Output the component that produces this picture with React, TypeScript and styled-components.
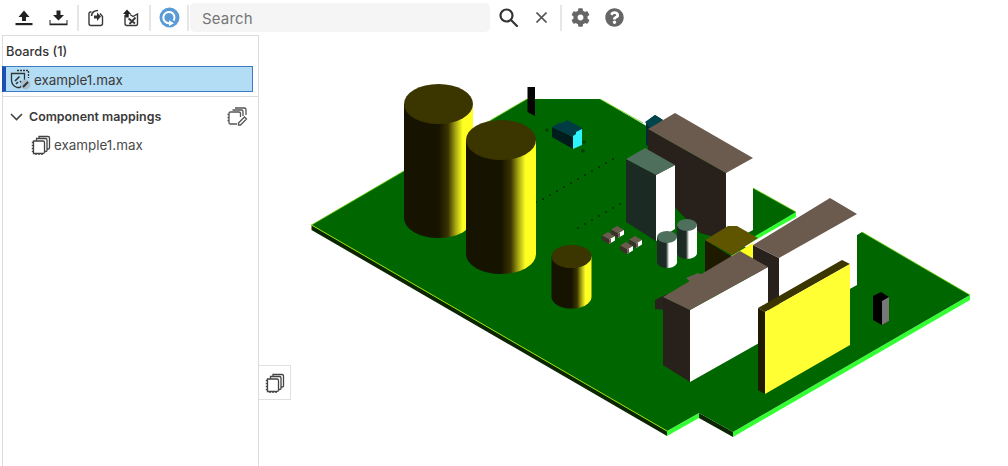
import React from "react";
import styled, { createGlobalStyle } from "styled-components";
import { FaCog, FaQuestionCircle } from "react-icons/fa";

const Global = createGlobalStyle`
  html, body { margin: 0; padding: 0; background: #fff; }
  body { font-family: Inter, "Noto Sans", sans-serif; color: #333; }
`;

const Page = styled.div`
  width: 1008px;
  height: 466px;
  display: flex;
  flex-direction: column;
  overflow: hidden;
  background: #fff;
`;

const Toolbar = styled.div`
  height: 35px;
  display: flex;
  align-items: center;
  padding-left: 12px;
  box-sizing: border-box;
`;

const ToolButton = styled.button<{ $w: number; $ml?: number }>`
  width: ${(p) => p.$w}px;
  height: 30px;
  margin-left: ${(p) => p.$ml ?? 0}px;
  padding: 0;
  border: 0;
  background: none;
  display: flex;
  align-items: center;
  justify-content: center;
  color: #666;
`;

const Sep = styled.div<{ $ml?: number }>`
  width: 2px;
  height: 26px;
  background: #e6e6e6;
  margin-left: ${(p) => p.$ml ?? 0}px;
`;

const SearchBox = styled.div`
  width: 300px;
  height: 29px;
  margin-left: 1px;
  background: #f5f5f5;
  border-radius: 5px;
  display: flex;
  align-items: center;
  padding: 2px 0 0 12px;
  box-sizing: border-box;
  font-size: 15px;
  letter-spacing: 0.15px;
  color: #757575;
`;

const Main = styled.div`
  flex: 1;
  display: flex;
  position: relative;
  min-height: 0;
`;

const Panel = styled.aside`
  width: 257px;
  margin-left: 2px;
  border-left: 1px solid #dcdcdc;
  border-right: 1px solid #dcdcdc;
  border-top: 1px solid #dcdcdc;
  box-sizing: border-box;
  display: flex;
  flex-direction: column;
`;

const PanelTitle = styled.div`
  height: 30px;
  display: flex;
  align-items: center;
  padding-left: 3px;
  font-size: 12.8px;
  font-weight: 500;
  color: #333;
`;

const SelectedRow = styled.div`
  height: 26px;
  width: 251px;
  margin-left: -1px;
  box-sizing: border-box;
  border: 1px solid #3a7ac8;
  border-left: 4px solid #1d4fb2;
  background: #b3dcf5;
  display: flex;
  align-items: center;
  gap: 3px;
  padding: 1px 0 0 4px;
  font-size: 13.4px;
  color: #3a3a3a;
`;

const Divider = styled.div`
  height: 1px;
  margin: 4px 0 0 -1px;
  background: #dcdcdc;
`;

const SectionHead = styled.div`
  height: 37px;
  box-sizing: border-box;
  display: flex;
  align-items: center;
  padding: 2px 10px 0 7px;
  font-size: 12.4px;
  font-weight: 600;
  color: #3a3a3a;
`;

const SectionLabel = styled.span`
  flex: 1;
  margin-left: 6px;
`;

const TreeRow = styled.div`
  height: 22px;
  display: flex;
  align-items: center;
  gap: 3px;
  padding-left: 28px;
  font-size: 13.4px;
  color: #4a4a4a;
`;

const Viewport = styled.div`
  flex: 1;
  min-width: 0;
  position: relative;
`;

const Scene = styled.svg`
  display: block;
  position: absolute;
  left: 0;
  top: 0;
`;

const FloatTab = styled.div`
  position: absolute;
  left: 0;
  top: 330px;
  width: 32px;
  height: 35px;
  box-sizing: border-box;
  border: 1px solid #e0e0e0;
  border-left: 0;
  background: #fff;
  display: flex;
  align-items: center;
  justify-content: center;
`;

const UpIcon = () => (
  <svg width="18" height="16" viewBox="0 0 18 16" fill="#222">
    <path d="M9 0.5 L14.5 7 H11 V11 H7 V7 H3.5 Z" />
    <rect x="0.5" y="13" width="17" height="2.2" />
  </svg>
);
const DownIcon = () => (
  <svg width="19" height="16" viewBox="0 0 19 16" fill="#222">
    <path d="M9.5 10.5 L4 5 H7.5 V0.5 H11.5 V5 H15 Z" />
    <path d="M0.5 10 H1.5 V13.5 H17.5 V10 H18.5 V15.2 H0.5 Z" />
  </svg>
);
const DocInIcon = () => (
  <svg width="16" height="18" viewBox="0 0 16 18" fill="none" stroke="#3a3a3a" strokeWidth="1.4">
    <path d="M3.5 3 H2.5 Q1 3 1 4.5 V14.5 Q1 16.5 3 16.5 H12.5 Q14.5 16.5 14.5 14.5 V7.5 L12 4.5" />
    <path d="M6 6.5 H9 V3.5 L13 7.5 L9 12 V9.5 H6 Z" fill="#333" stroke="none" />
    <path d="M3.5 7 Q4 1.5 10 1.5" strokeWidth="1.6" />
  </svg>
);
const DocOutIcon = () => (
  <svg width="18" height="18" viewBox="0 0 18 18" fill="none" stroke="#3a3a3a" strokeWidth="1.4">
    <path d="M3 6 V14.5 Q3 16.5 5 16.5 H14 Q15.5 16.5 15.5 14.5 V5 L11 7.5 L8 5.5" />
    <path d="M5 0.5 L1 5 H3.3 V8.5 H6.7 V5 H9 Z" fill="#222" stroke="none" />
    <path d="M6.5 9.5 L13 14.5 M13.5 8.5 L7.5 15" strokeWidth="1.9" />
  </svg>
);
const SyncIcon = () => (
  <svg width="21" height="21" viewBox="0 0 21 21">
    <circle cx="10.5" cy="10.5" r="10" fill="#5a9bd6" />
    <path d="M14.6 13.6 A5.6 5.6 0 1 0 10.5 16.1" fill="none" stroke="#fff" strokeWidth="2" />
    <path d="M10 13.2 L15 16.2 L10 19 Z" fill="#fff" />
  </svg>
);
const SearchIcon = () => (
  <svg width="19" height="19" viewBox="0 0 19 19" fill="none" stroke="#333" strokeWidth="2.2">
    <circle cx="7.5" cy="7.5" r="6" />
    <path d="M12 12 L18 18" strokeLinecap="round" />
  </svg>
);
const CloseIcon = () => (
  <svg width="11" height="11" viewBox="0 0 11 11" fill="none" stroke="#555" strokeWidth="1.6">
    <path d="M0.5 0.5 L10.5 10.5 M10.5 0.5 L0.5 10.5" />
  </svg>
);
const BoardFileIcon = () => (
  <svg width="21" height="21" viewBox="0 0 21 21" fill="none" stroke="#333" strokeWidth="1.3">
    <path d="M7 1.5 H18.5 V9" strokeDasharray="2 1" />
    <path d="M1.5 4.5 H14.5 V13 L10 18.5 H7 Q1.5 16.5 1.5 11 Z" fill="#b3dcf5" />
    <path d="M5 12 L9.5 7.5 M10 12 L12 14 M6 15 L8 13" strokeWidth="1.7" />
    <circle cx="15.5" cy="15.5" r="5" fill="#a9bfcc" stroke="none" />
    <path d="M13 18 L18 13" stroke="#333" strokeWidth="2" />
  </svg>
);
const StackIcon = () => (
  <svg width="20" height="20" viewBox="0 0 20 20" fill="#fff" stroke="#444" strokeWidth="1.3">
    <path d="M8 1.5 H17 Q18.5 1.5 18.5 3 V13 Q18.5 14 17 14 H8 Z" />
    <path d="M5.5 3.5 H14.5 Q16 3.5 16 5 V15.5 Q16 16.5 14.5 16.5 H5.5 Z" />
    <path d="M2.5 6 H12 Q13.5 6 13.5 7.5 V17 Q13.5 18.5 12 18.5 H2.5 Z" />
    <path d="M2.5 7.5 H0.8 M2.5 10.5 H0.8 M2.5 13.5 H0.8 M2.5 16.5 H0.8 M5 18.5 V20 M8 18.5 V20 M11 18.5 V20" strokeWidth="1.4" />
  </svg>
);
const StackEditIcon = () => (
  <svg width="21" height="19" viewBox="0 0 21 19" fill="#fff" stroke="#555" strokeWidth="1.3">
    <path d="M8 1 H17.5 Q19 1 19 2.5 V8" />
    <path d="M5.5 3 H14.5 Q16 3 16 4.5 V9" />
    <path d="M10 17 H3.5 Q2 17 2 15.5 V6.5 Q2 5 3.5 5 H12 Q13.5 5 13.5 6.5 V10" />
    <path d="M2 7.5 H0.5 M2 10.5 H0.5 M2 13.5 H0.5" />
    <path d="M11.5 16 L17.5 10 L19.5 12 L13.5 18 H11.5 Z" />
  </svg>
);
const ChevronIcon = () => (
  <svg width="13" height="8" viewBox="0 0 13 8" fill="none" stroke="#444" strokeWidth="1.6">
    <path d="M1 1 L6.5 6.5 L12 1" />
  </svg>
);

const Cylinder = ({ cx, rx, ry, top, bottom }: { cx: number; rx: number; ry: number; top: number; bottom: number }) => (
  <g>
    <path
      d={`M${cx - rx} ${top} V${bottom} A${rx} ${ry} 0 0 0 ${cx + rx} ${bottom} V${top} Z`}
      fill="url(#cyl)"
    />
    <ellipse cx={cx} cy={top} rx={rx} ry={ry} fill="#3b3500" />
  </g>
);

const Box = ({ top, left, right }: { top: string; left: string; right: string }) => (
  <g>
    <path d={left} fill="#28201a" />
    <path d={right} fill="#fff" />
    <path d={top} fill="#6b5a4e" />
  </g>
);

const Chip = ({ x, y }: { x: number; y: number }) => (
  <g transform={`translate(${x} ${y})`}>
    <path d="M0 4.5 L6 1 L13 5 L7 8.5 Z" fill="#6b5a4e" />
    <path d="M0 4.5 L7 8.5 V13 L0 9 Z" fill="#3a302a" />
    <path d="M7 8.5 L13 5 V9.5 L7 13 Z" fill="#fff" />
    <path d="M7 8.5 L9 7.5 V12 L7 13 Z" fill="#6b5a4e" />
  </g>
);

const holes: [number, number][] = [
  [536, 202], [543, 199], [550, 195], [557, 191], [564, 187], [571, 183], [578, 179], [585, 175], [592, 171], [599, 167], [606, 163], [613, 159],
  [578, 228], [585, 224], [592, 220], [599, 216], [606, 212], [613, 208], [620, 204],
];

const Board = () => (
  <Scene width="749" height="431" viewBox="259 35 749 431">
    <defs>
      <linearGradient id="cyl" x1="0" x2="1" y1="0" y2="0">
        <stop offset="0" stopColor="#161300" />
        <stop offset="0.5" stopColor="#161300" />
        <stop offset="0.64" stopColor="#3a3400" />
        <stop offset="0.75" stopColor="#a8a812" />
        <stop offset="0.85" stopColor="#ffff22" />
        <stop offset="1" stopColor="#ffff22" />
      </linearGradient>
      <linearGradient id="smallCyl" x1="0" x2="1" y1="0" y2="0">
        <stop offset="0" stopColor="#1b2a22" />
        <stop offset="0.45" stopColor="#1b2a22" />
        <stop offset="0.6" stopColor="#fff" />
        <stop offset="1" stopColor="#fff" />
      </linearGradient>
    </defs>

    <path d="M311.5 225 V230 L667 436 V431 Z" fill="#0a2600" />
    <path d="M667 431 V436 L699 418 V413 Z" fill="#33ff33" />
    <path d="M699 413 V418 L733 437 V432 Z" fill="#0a2600" />
    <path d="M733 432 V437 L970 300 V295 Z" fill="#33ff33" />
    <path d="M796 212 V217 L745 246 L745 240 Z" fill="#33ff33" />

    <path
      d="M311.5 225 L527 99 H600 L753 188 L796 212 L740 245 L800 270 L862 232 L970 295 L733 432 L699 413 L667 431 Z"
      fill="#006600"
    />
    <path d="M311.5 225 L667 431" stroke="#9adf00" strokeWidth="1" fill="none" />
    <path d="M311.5 225 L527 99 M600 99 L643 123 M753 188 L796 212 M862 232 L970 295" stroke="#66d000" strokeWidth="0.8" fill="none" />

    {holes.map(([x, y]) => (
      <circle key={`${x}-${y}`} cx={x} cy={y} r="1" fill="#0a2a05" />
    ))}
    <circle cx="547" cy="130" r="1.6" fill="#0a3a05" />
    <circle cx="584" cy="142" r="1.6" fill="#0a3a05" />
    <circle cx="583" cy="151" r="1.8" fill="#0a3a05" />

    <path d="M527.5 87 H535 V116 L527.5 112 Z" fill="#050505" />

    <path d="M552 127 L573 137 V149 L552 137 Z" fill="#001c1c" />
    <path d="M552 127 L560 122.5 L562 123 L567 120 L583 128.5 L573 137 Z" fill="#003c44" />
    <path d="M573 136 L576 134 L576 132 L582 129 V145 L573 149 Z" fill="#2cf5ff" />

    <Cylinder cx={438.5} rx={34.5} ry={20} top={104} bottom={218} />
    <Cylinder cx={501} rx={35} ry={20} top={140} bottom={254} />
    <Cylinder cx={571.5} rx={20} ry={11.5} top={256.5} bottom={297} />

    <Chip x={602} y={231} />
    <Chip x={611} y={225} />
    <Chip x={620} y={241} />
    <Chip x={629} y={235} />

    <path d="M646 122 L655 115 L663 120 L648 146 L646 145 Z" fill="#002c32" />
    <path d="M645 122 L655 115 L663 120 L650 128 Z" fill="#00444c" />

    <Box
      top="M648 129 L675 113 L753 158 L726 173 Z"
      left="M648 129 L726 173 V240 L700 233 L648 180 Z"
      right="M726 173 L753 158 V230 L726 245 Z"
    />

    <path d="M656 175 L675 165 V229 L656 241 Z" fill="#fff" />
    <path d="M626 159 L656 175 V241 L626 222 Z" fill="#1b2a22" />
    <path d="M626 159 L645 148 L675 165 L656 175 Z" fill="#4e6f5c" />

    <path d="M677 224 V253 A10 6 0 0 0 697 253 V224 Z" fill="url(#smallCyl)" />
    <ellipse cx="687" cy="225" rx="10" ry="6" fill="#4e6f5c" />
    <path d="M657 237 V263 A10 6 0 0 0 677 261 V237 Z" fill="url(#smallCyl)" />
    <ellipse cx="667" cy="237" rx="10" ry="6" fill="#4e6f5c" />

    <path d="M705 240 L731 256 V272 L705 272 Z" fill="#1e1a00" />
    <path d="M731 256 L753 243 V262 L731 274 Z" fill="#ffff22" />
    <path d="M705 240 L728 226 H737 L758 238 L732 255 Z" fill="#5f5500" />

    <path d="M655 300 L667 294 V310 L655 309 Z" fill="#2a221c" />
    <path d="M686 278 L698 273 L705 276 L692 283 Z" fill="#6b5a4e" />

    <Box
      top="M753 245 L830 198 L857 214 L779 258 Z"
      left="M753 245 L779 258 V320 L753 320 Z"
      right="M779 258 L857 214 V285 L779 328 Z"
    />

    <Box
      top="M663 297 L740 251 L768 267 L690 310 Z"
      left="M663 297 L690 310 V382 L663 365 Z"
      right="M690 310 L768 267 V338 L690 382 Z"
    />

    <path d="M758 308 L842 260 L850 264 L765 312 Z" fill="#3b3500" />
    <path d="M758 308 L765 312 V394 L758 390 Z" fill="#1f1a00" />
    <path d="M765 312 L850 264 V345 L765 394 Z" fill="#ffff33" />

    <path d="M873 296 L881 292 L889 297 V321 L882 325 L873 320 Z" fill="#000" />
    <path d="M882 301 L889 297 V321 L882 325 Z" fill="#777" />
  </Scene>
);

export default function App() {
  return (
    <Page>
      <Global />
      <Toolbar>
        <ToolButton $w={24}><UpIcon /></ToolButton>
        <ToolButton $w={24} $ml={10}><DownIcon /></ToolButton>
        <Sep $ml={7} />
        <ToolButton $w={24} $ml={5}><DocInIcon /></ToolButton>
        <ToolButton $w={24} $ml={11}><DocOutIcon /></ToolButton>
        <Sep $ml={6} />
        <ToolButton $w={36}><SyncIcon /></ToolButton>
        <Sep />
        <SearchBox>Search</SearchBox>
        <ToolButton $w={36}><SearchIcon /></ToolButton>
        <ToolButton $w={30}><CloseIcon /></ToolButton>
        <Sep $ml={4} />
        <ToolButton $w={36}><FaCog size={19} /></ToolButton>
        <ToolButton $w={33}><FaQuestionCircle size={19} /></ToolButton>
      </Toolbar>
      <Main>
        <Panel>
          <PanelTitle>Boards (1)</PanelTitle>
          <SelectedRow><BoardFileIcon />example1.max</SelectedRow>
          <Divider />
          <SectionHead>
            <ChevronIcon />
            <SectionLabel>Component mappings</SectionLabel>
            <StackEditIcon />
          </SectionHead>
          <TreeRow><StackIcon />example1.max</TreeRow>
        </Panel>
        <Viewport>
          <Board />
          <FloatTab><StackIcon /></FloatTab>
        </Viewport>
      </Main>
    </Page>
  );
}
